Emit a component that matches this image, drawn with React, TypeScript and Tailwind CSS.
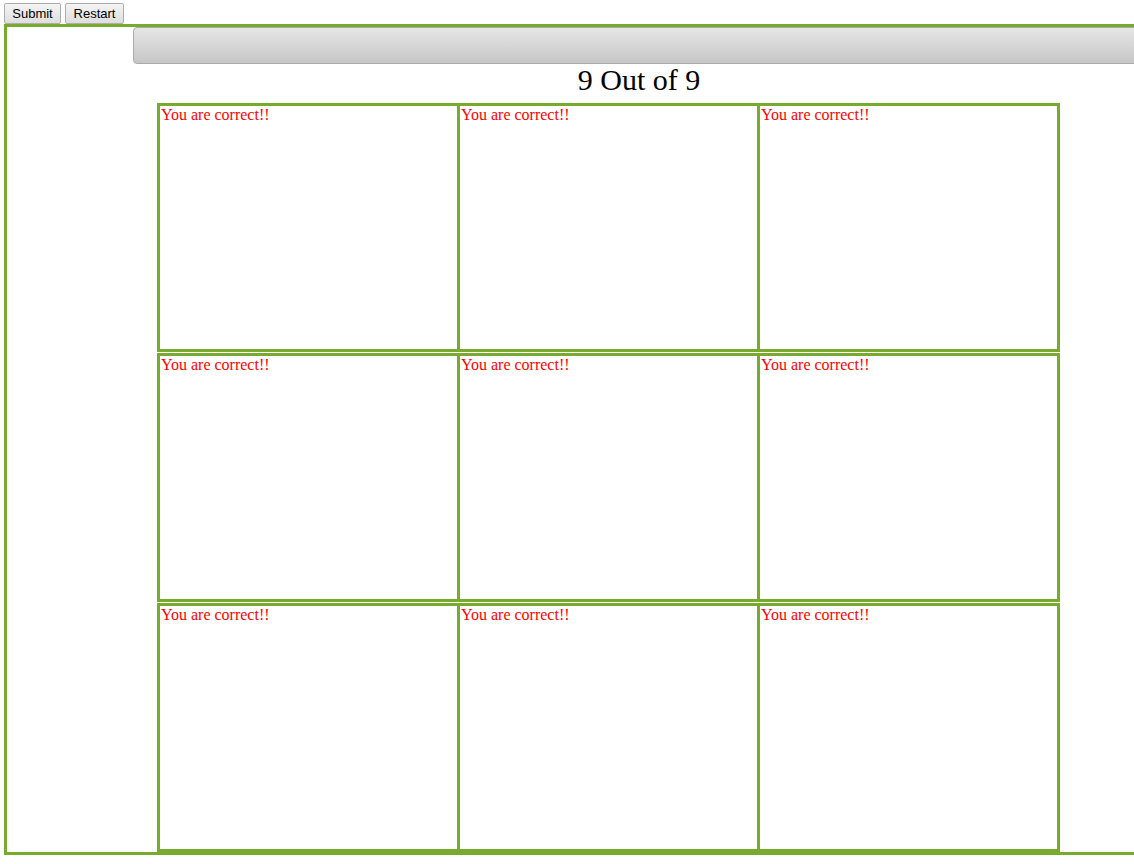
import React from "react"

const cells = Array.from({ length: 9 }, (_, i) => i)

export default function App() {
  return (
    <div className="w-[1134px] h-[864px] overflow-hidden bg-white font-['Liberation_Serif',serif]">
      {/* Buttons */}
      <div className="flex gap-[4px] pl-[4px] pt-[3px] h-[24px]">
        <button className="h-[21px] w-[57px] rounded-[2px] border border-[#adadad] bg-gradient-to-b from-[#f4f4f4] to-[#dedede] text-[13px] text-black font-['Liberation_Sans',sans-serif] leading-none">
          Submit
        </button>
        <button className="h-[21px] w-[59px] rounded-[2px] border border-[#adadad] bg-gradient-to-b from-[#f4f4f4] to-[#dedede] text-[13px] text-black font-['Liberation_Sans',sans-serif] leading-none">
          Restart
        </button>
      </div>

      {/* Main panel */}
      <div className="ml-[4px] w-[1200px] h-[831px] border-[3px] border-[#77aa2d] overflow-hidden">
        <div className="ml-[126px] h-[37px] rounded-l-[4px] border border-[#a9a9a9] bg-gradient-to-b from-[#e6e6e6] to-[#c6c6c6]" />
        <div className="ml-[126px] w-[1012px] h-[39px] text-center text-[30px] leading-[32px] text-black">
          9 Out of 9
        </div>
        <div className="ml-[150px] w-[903px] flex flex-wrap gap-y-[1px]">
          {cells.map((i) => (
            <div
              key={i}
              className={`w-[303px] h-[249px] border-[3px] border-[#77aa2d] pl-[1px] text-[16px] leading-[17px] text-[#ff0000] ${i % 3 === 0 ? "" : "-ml-[3px]"}`}
            >
              You are correct!!
            </div>
          ))}
        </div>
      </div>
    </div>
  )
}
